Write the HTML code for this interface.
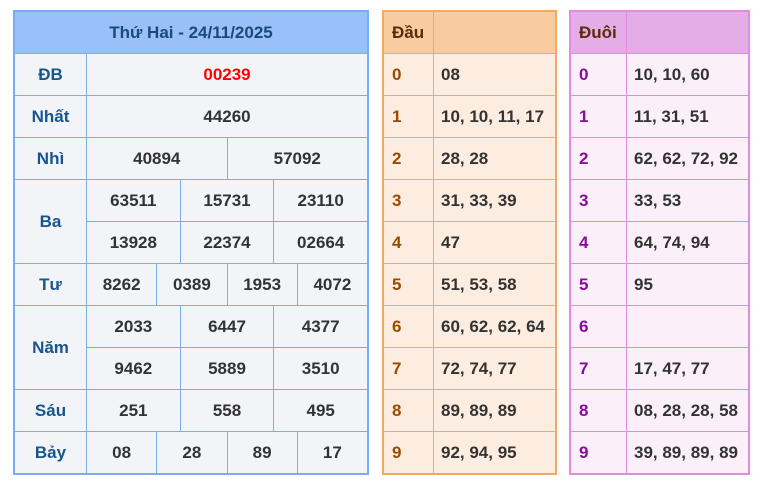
<!DOCTYPE html>
<html><head><meta charset="utf-8"><style>
*{box-sizing:border-box;margin:0;padding:0}
body{width:762px;height:487px;background:#fff;font-family:"Liberation Sans",Arial,sans-serif;font-weight:bold;font-size:17px;color:#333;position:relative;overflow:hidden}
.t{position:absolute;top:10px;border:2px solid}
.r{display:flex;height:42px;border-bottom:1px solid}
.r:last-child{border-bottom:none;height:41px}
.c{flex:1;display:flex;align-items:center;justify-content:center;border-right:1px solid}
.c:last-child{border-right:none}
.b{left:13px;width:356px;border-color:#7aaef3;background:#f2f4f8}
.b .r,.b .c,.b .l{border-color:#7aaef3}
.b .h{background:#99c0f8;color:#1a4a7a;justify-content:center;align-items:center;display:flex;height:42px;border-bottom:1px solid #7aaef3}
.l{width:72px;flex:none;display:flex;align-items:center;justify-content:center;border-right:1px solid;color:#17558f}
.v{flex:1;display:flex;flex-direction:column}
.v .r{height:42px}
.o{left:382px;width:175px;border-color:#f5a860;background:#fdece0}
.o .r,.o .c{border-color:#f5a860}
.p{left:569px;width:181px;border-color:#e28ce0;background:#fbf0fa}
.p .r,.p .c{border-color:#e28ce0}
.o .k,.p .k{flex:none;justify-content:flex-start;padding-left:8px}
.o .k{width:50px;color:#9a4a00}
.p .k{width:56px;color:#8a0a9a}
.o .x,.p .x{justify-content:flex-start;padding-left:7px}
.o .hd{background:#f9cba0}
.p .hd{background:#e4ade8}
.hd .k{color:#5a2a0a!important}
</style></head><body>
<div class="t b">
<div class="h">Thứ Hai - 24/11/2025</div>
<div class="r"><div class="l">ĐB</div><div class="c" style="color:#f00">00239</div></div>
<div class="r"><div class="l">Nhất</div><div class="c">44260</div></div>
<div class="r"><div class="l">Nhì</div><div class="c">40894</div><div class="c">57092</div></div>
<div class="r" style="height:84px"><div class="l">Ba</div><div class="v">
<div class="r"><div class="c">63511</div><div class="c">15731</div><div class="c">23110</div></div>
<div class="r" style="border-bottom:none;height:41px"><div class="c">13928</div><div class="c">22374</div><div class="c">02664</div></div></div></div>
<div class="r"><div class="l">Tư</div><div class="c">8262</div><div class="c">0389</div><div class="c">1953</div><div class="c">4072</div></div>
<div class="r" style="height:84px"><div class="l">Năm</div><div class="v">
<div class="r"><div class="c">2033</div><div class="c">6447</div><div class="c">4377</div></div>
<div class="r" style="border-bottom:none;height:41px"><div class="c">9462</div><div class="c">5889</div><div class="c">3510</div></div></div></div>
<div class="r"><div class="l">Sáu</div><div class="c">251</div><div class="c">558</div><div class="c">495</div></div>
<div class="r"><div class="l">Bảy</div><div class="c">08</div><div class="c">28</div><div class="c">89</div><div class="c">17</div></div>
</div>
<div class="t o">
<div class="r hd"><div class="c k">Đầu</div><div class="c x"></div></div>
<div class="r"><div class="c k">0</div><div class="c x">08</div></div>
<div class="r"><div class="c k">1</div><div class="c x">10, 10, 11, 17</div></div>
<div class="r"><div class="c k">2</div><div class="c x">28, 28</div></div>
<div class="r"><div class="c k">3</div><div class="c x">31, 33, 39</div></div>
<div class="r"><div class="c k">4</div><div class="c x">47</div></div>
<div class="r"><div class="c k">5</div><div class="c x">51, 53, 58</div></div>
<div class="r"><div class="c k">6</div><div class="c x">60, 62, 62, 64</div></div>
<div class="r"><div class="c k">7</div><div class="c x">72, 74, 77</div></div>
<div class="r"><div class="c k">8</div><div class="c x">89, 89, 89</div></div>
<div class="r"><div class="c k">9</div><div class="c x">92, 94, 95</div></div>
</div>
<div class="t p">
<div class="r hd"><div class="c k">Đuôi</div><div class="c x"></div></div>
<div class="r"><div class="c k">0</div><div class="c x">10, 10, 60</div></div>
<div class="r"><div class="c k">1</div><div class="c x">11, 31, 51</div></div>
<div class="r"><div class="c k">2</div><div class="c x">62, 62, 72, 92</div></div>
<div class="r"><div class="c k">3</div><div class="c x">33, 53</div></div>
<div class="r"><div class="c k">4</div><div class="c x">64, 74, 94</div></div>
<div class="r"><div class="c k">5</div><div class="c x">95</div></div>
<div class="r"><div class="c k">6</div><div class="c x"></div></div>
<div class="r"><div class="c k">7</div><div class="c x">17, 47, 77</div></div>
<div class="r"><div class="c k">8</div><div class="c x">08, 28, 28, 58</div></div>
<div class="r"><div class="c k">9</div><div class="c x">39, 89, 89, 89</div></div>
</div>
</body></html>
